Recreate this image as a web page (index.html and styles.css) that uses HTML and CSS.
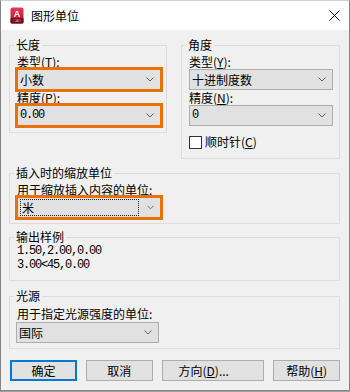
FILE: index.html
```html
<!DOCTYPE html>
<html lang="zh-CN">
<head>
<meta charset="utf-8">
<title>图形单位</title>
<link rel="stylesheet" href="styles.css">
</head>
<body>
<div class="window">
  <div class="titlebar">
    <svg class="appicon" width="14" height="17" viewBox="0 0 14 17">
      <defs>
        <linearGradient id="g" x1="0" y1="0" x2="0" y2="1">
          <stop offset="0" stop-color="#e8375a"/>
          <stop offset="1" stop-color="#b5102e"/>
        </linearGradient>
      </defs>
      <rect x="0.5" y="0.5" width="13" height="16" rx="2" fill="url(#g)"/>
      <rect x="0.5" y="11" width="13" height="5.5" rx="1" fill="#6e0a1c"/>
      <text x="7" y="9.5" text-anchor="middle" font-family="Liberation Sans, sans-serif" font-weight="bold" font-size="9" fill="#fff">A</text>
      <text x="7" y="15.3" text-anchor="middle" font-family="Liberation Sans, sans-serif" font-size="3.6" fill="#e8a0ad">CAD</text>
    </svg>
    <span class="title">图形单位</span>
    <svg class="close" width="11" height="11" viewBox="0 0 11 11">
      <path d="M0.5 0.5 L10.5 10.5 M10.5 0.5 L0.5 10.5" stroke="#000" stroke-width="1" fill="none"/>
    </svg>
  </div>
  <div class="content">
    <div class="row">
      <fieldset class="group len">
        <legend>长度</legend>
        <div class="label">类型(<u>T</u>):</div>
        <div class="combo hl"><span class="val">小数</span><svg class="chev" width="8" height="5" viewBox="0 0 8 5"><path d="M0.5 0.5 L4 4 L7.5 0.5" stroke="#606060" fill="none"/></svg></div>
        <div class="label">精度(<u>P</u>):</div>
        <div class="combo hl"><span class="val mono">0.00</span><svg class="chev" width="8" height="5" viewBox="0 0 8 5"><path d="M0.5 0.5 L4 4 L7.5 0.5" stroke="#606060" fill="none"/></svg></div>
      </fieldset>
      <fieldset class="group ang">
        <legend>角度</legend>
        <div class="label">类型(<u>Y</u>):</div>
        <div class="combo"><span class="val">十进制度数</span><svg class="chev" width="8" height="5" viewBox="0 0 8 5"><path d="M0.5 0.5 L4 4 L7.5 0.5" stroke="#606060" fill="none"/></svg></div>
        <div class="label">精度(<u>N</u>):</div>
        <div class="combo"><span class="val mono">0</span><svg class="chev" width="8" height="5" viewBox="0 0 8 5"><path d="M0.5 0.5 L4 4 L7.5 0.5" stroke="#606060" fill="none"/></svg></div>
        <div class="check"><span class="box"></span><span>顺时针(<u>C</u>)</span></div>
      </fieldset>
    </div>
    <fieldset class="group ins">
      <legend>插入时的缩放单位</legend>
      <div class="label">用于缩放插入内容的单位:</div>
      <div class="combo hl"><span class="val focus">米</span><svg class="chev" width="8" height="5" viewBox="0 0 8 5"><path d="M0.5 0.5 L4 4 L7.5 0.5" stroke="#606060" fill="none"/></svg></div>
    </fieldset>
    <fieldset class="group out">
      <legend>输出样例</legend>
      <div class="sample mono">1.50,2.00,0.00</div>
      <div class="sample mono">3.00&lt;45,0.00</div>
    </fieldset>
    <fieldset class="group light">
      <legend>光源</legend>
      <div class="label">用于指定光源强度的单位:</div>
      <div class="combo"><span class="val">国际</span><svg class="chev" width="8" height="5" viewBox="0 0 8 5"><path d="M0.5 0.5 L4 4 L7.5 0.5" stroke="#606060" fill="none"/></svg></div>
    </fieldset>
    <div class="buttons">
      <div class="btn default">确定</div>
      <div class="btn">取消</div>
      <div class="btn wide">方向(<u>D</u>)...</div>
      <div class="btn">帮助(<u>H</u>)</div>
    </div>
  </div>
</div>
</body>
</html>
```

FILE: styles.css
```css
html, body {
  margin: 0;
  padding: 0;
  background: #a0a0a0;
}
body {
  width: 350px;
  height: 392px;
  font-family: "Noto Sans CJK SC", "Noto Sans", sans-serif;
  font-size: 12px;
  color: #000;
}
.window {
  box-sizing: border-box;
  width: 350px;
  height: 391px;
  background: #f0f0f0;
  border: 1px solid #858585;
  border-top-color: #d0d0d0;
  display: flex;
  flex-direction: column;
}
.titlebar {
  height: 29px;
  background: #fff;
  display: flex;
  align-items: center;
  padding-left: 9px;
}
.appicon {
  display: block;
  margin-right: 7px;
}
.title {
  font-size: 12px;
  line-height: 14px;
  flex: 1;
}
.close {
  margin-right: 9px;
  display: block;
}
.content {
  padding: 8px 9px 0 8px;
  display: flex;
  flex-direction: column;
}
.row {
  display: flex;
  align-items: flex-start;
  gap: 14px;
}
.group {
  margin: 0;
  border: 1px solid #dcdcdc;
  padding: 3px 5px 5px 7px;
  min-width: 0;
  box-sizing: border-box;
}
.group legend {
  padding: 0 2px;
  margin-left: -3px;
  line-height: 14px;
  font-size: 12px;
}
.len { width: 158px; }
.ang { width: 159px; padding-bottom: 9px; }
.label {
  line-height: 14px;
  height: 14px;
  white-space: nowrap;
}
u {
  text-decoration: underline;
  text-underline-offset: 1px;
}
.combo {
  box-sizing: border-box;
  width: 144px;
  height: 21px;
  border: 1px solid #adadad;
  background: #e1e1e1;
  display: flex;
  align-items: center;
  padding-left: 2px;
  margin-bottom: 1px;
  position: relative;
}
.combo .val {
  flex: 1;
  line-height: 15px;
}
.combo.hl {
  outline: 3px solid #e8710a;
  outline-offset: -1px;
}
.chev {
  display: block;
  margin-right: 6px;
}
.mono {
  font-family: "Liberation Mono", "DejaVu Sans Mono", monospace;
  font-size: 12px;
  letter-spacing: -1.2px;
}
.combo .val.focus {
  flex: 0 0 auto;
  width: 116px;
  height: 15px;
  border: 1px dotted #222;
  padding-left: 1px;
  margin-right: 8px;
  line-height: 15px;
}
.check {
  display: flex;
  align-items: center;
  gap: 3px;
  margin-top: 9px;
  line-height: 14px;
}
.check .box {
  box-sizing: border-box;
  width: 13px;
  height: 13px;
  background: #fff;
  border: 1px solid #333;
}
.ins {
  margin-top: 7px;
  padding-bottom: 4px;
}
.out {
  margin-top: 6px;
  padding-top: 0;
  padding-bottom: 8px;
}
.sample {
  line-height: 14px;
  height: 14px;
}
.light {
  margin-top: 8px;
  padding-top: 4px;
  padding-bottom: 4px;
}
.light .combo { margin-top: 1px; width: 143px; margin-left: -1px; }
.buttons {
  display: flex;
  gap: 9px;
  margin-top: 11px;
  margin-left: 1px;
}
.btn {
  box-sizing: border-box;
  width: 67px;
  height: 21px;
  border: 1px solid #adadad;
  background: #e1e1e1;
  text-align: center;
  line-height: 19px;
}
.btn.wide {
  width: 103px;
  text-align: left;
  padding-left: 16px;
}
.btn.default {
  border: 2px solid #0078d7;
  line-height: 17px;
}
```
